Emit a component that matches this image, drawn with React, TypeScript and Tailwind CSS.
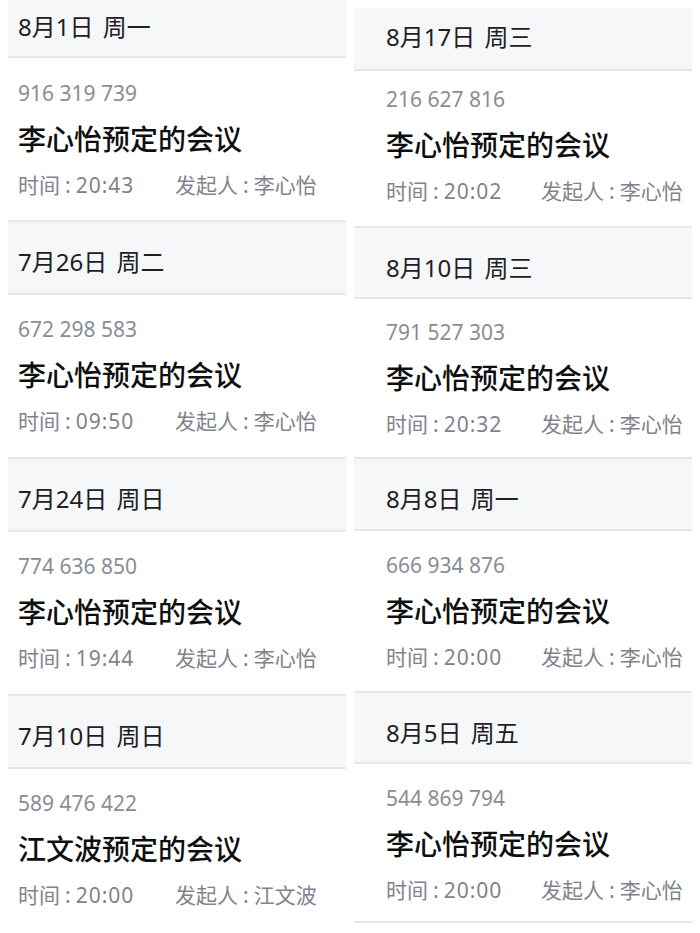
import React from "react";

type Meeting = {
    date: string;
    code: string;
    title: string;
    time: string;
    host: string;
};

const leftItems: Meeting[] = [
    { date: "8月1日 周一", code: "916 319 739", title: "李心怡预定的会议", time: "20:43", host: "李心怡" },
    { date: "7月26日 周二", code: "672 298 583", title: "李心怡预定的会议", time: "09:50", host: "李心怡" },
    { date: "7月24日 周日", code: "774 636 850", title: "李心怡预定的会议", time: "19:44", host: "李心怡" },
    { date: "7月10日 周日", code: "589 476 422", title: "江文波预定的会议", time: "20:00", host: "江文波" },
];

const rightItems: Meeting[] = [
    { date: "8月17日 周三", code: "216 627 816", title: "李心怡预定的会议", time: "20:02", host: "李心怡" },
    { date: "8月10日 周三", code: "791 527 303", title: "李心怡预定的会议", time: "20:32", host: "李心怡" },
    { date: "8月8日 周一", code: "666 934 876", title: "李心怡预定的会议", time: "20:00", host: "李心怡" },
    { date: "8月5日 周五", code: "544 869 794", title: "李心怡预定的会议", time: "20:00", host: "李心怡" },
];

// header / body classes per slot, so each column lines up with the screenshot
const leftHeader = [
    "h-[58px] pt-[15px] border-b-2",
    "h-[75px] pt-[28px] border-y-2",
    "h-[75px] pt-[28px] border-y-2",
    "h-[75px] pt-[28px] border-y-2",
];
const leftBody = ["h-[162px] pt-[25px]", "h-[162px] pt-[24px]", "h-[162px] pt-[24px]", "h-[162px] pt-[24px]"];

const rightHeader = [
    "h-[63px] pt-[17px] border-b-2",
    "h-[73px] pt-[28px] border-y-2",
    "h-[74px] pt-[28px] border-y-2",
    "h-[73px] pt-[28px] border-y-2",
];
const rightBody = [
    "h-[155px] pt-[18px]",
    "h-[158px] pt-[23px]",
    "h-[160px] pt-[24px]",
    "h-[159px] pt-[24px] border-b-2 border-[#e6e7eb]",
];

const MeetingCard: React.FC<{ m: Meeting; header: string; body: string; pad: string; timeW: string }> = ({
    m,
    header,
    body,
    pad,
    timeW,
}) => (
    <div>
        <div
            className={`${header} ${pad} bg-[#f6f7f9] border-[#e6e7eb] text-[24px] leading-none text-[#1f2023] [word-spacing:3px]`}
        >
            {m.date}
        </div>
        <div className={`${body} ${pad} bg-white flex flex-col`}>
            <div className="text-[21px] leading-none text-[#898d96]">{m.code}</div>
            <div className="mt-[21px] text-[28px] leading-none font-medium text-[#0f0f10]">{m.title}</div>
            <div className="mt-[22px] flex text-[21px] leading-none text-[#7f838c]">
                <span className={timeW}>
                    时间<span className="mx-[5px]">:</span>
                    <span className="tracking-[1px]">{m.time}</span>
                </span>
                <span>
                    发起人<span className="mx-[5px]">:</span>
                    {m.host}
                </span>
            </div>
        </div>
    </div>
);

export default function App() {
    return (
        <div className="w-[700px] h-[933px] overflow-hidden bg-white flex gap-2 px-2 items-start font-[family-name:'Noto_Sans','Noto_Sans_CJK_SC',sans-serif]">
            <div className="w-[338px] flex flex-col">
                {leftItems.map((m, i) => (
                    <MeetingCard key={m.code} m={m} header={leftHeader[i]} body={leftBody[i]} pad="pl-[10px]" timeW="w-[157px]" />
                ))}
            </div>
            <div className="w-[338px] mt-2 flex flex-col">
                {rightItems.map((m, i) => (
                    <MeetingCard key={m.code} m={m} header={rightHeader[i]} body={rightBody[i]} pad="pl-[32px]" timeW="w-[155px]" />
                ))}
            </div>
        </div>
    );
}
